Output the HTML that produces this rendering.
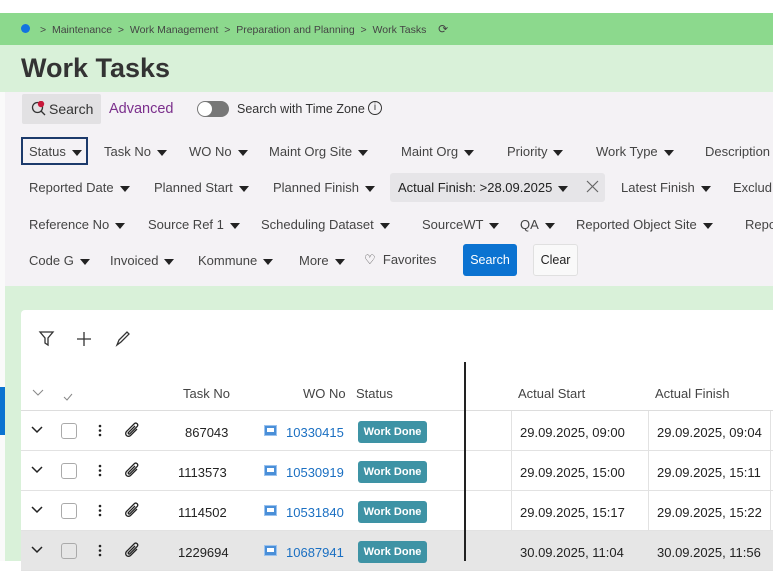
<!DOCTYPE html>
<html><head><meta charset="utf-8"><style>
*{margin:0;padding:0;box-sizing:border-box}
body{width:773px;height:561px;overflow:hidden;background:#fff;font-family:"Liberation Sans",sans-serif;position:relative;color:#333}
.a{position:absolute;white-space:nowrap}
.f{font-size:13px;color:#444}
.f::after{content:"";display:inline-block;margin-left:6px;vertical-align:middle;border-left:5px solid transparent;border-right:5px solid transparent;border-top:6px solid #222}
.row{position:absolute;left:21px;width:752px;height:40px;border-bottom:1px solid #e2e2e2;background:#fff}
.cell{position:absolute;font-size:13px;color:#222}
.badge{position:absolute;left:337px;top:10px;width:69px;height:22px;background:#3e93a5;color:#fff;font-size:11px;font-weight:bold;border-radius:3px;text-align:center;line-height:22px}
.cb{position:absolute;left:40px;top:12px;width:16px;height:16px;border:1px solid #aaa;border-radius:3px;background:#fff}
.wo{position:absolute;left:243px;top:14px;width:13px;height:11px;background:#4a8fd8;border:1px solid #9bc3ef}
.wo::after{content:"";position:absolute;left:2px;right:2px;top:2px;height:4px;background:#fff}
.ic{position:absolute;left:0;top:0}
</style></head><body>
<div class="a" style="left:0;top:13px;width:773px;height:32px;background:#8cd98d"></div>
<div class="a" style="left:0;top:45px;width:773px;height:47px;background:#d9f1d9"></div>
<div class="a" style="left:5px;top:92px;width:768px;height:194px;background:#f4f2f5"></div>
<div class="a" style="left:5px;top:286px;width:768px;height:275px;background:#d9f1d9"></div>
<div class="a" style="left:0;top:92px;width:5px;height:469px;background:#fafafa"></div>
<div class="a" style="left:0;top:387px;width:5px;height:48px;background:#0b73d1"></div>

<div class="a" style="left:21px;top:24px;width:9px;height:9px;border-radius:50%;background:#1274e0"></div>
<div class="a" style="left:40px;top:22px;font-size:10.5px;color:#444">&gt;&nbsp; Maintenance &nbsp;&gt;&nbsp; Work Management &nbsp;&gt;&nbsp; Preparation and Planning &nbsp;&gt;&nbsp; Work Tasks &nbsp;&nbsp; <span style="font-size:12px">⟳</span></div>
<div class="a" style="left:21px;top:53px;font-size:27px;font-weight:bold;color:#333">Work Tasks</div>

<div class="a" style="left:22px;top:94px;width:79px;height:30px;background:#e2e1e3;border-radius:2px"></div>
<svg class="a" style="left:31px;top:101px" width="16" height="16" viewBox="0 0 16 16"><circle cx="6.5" cy="6.5" r="5" fill="none" stroke="#333" stroke-width="1.3"/><path d="M10 10l4 4" stroke="#333" stroke-width="1.3"/><circle cx="10" cy="3" r="3.2" fill="#c8173a"/></svg>
<div class="a" style="left:49px;top:101px;font-size:14px;color:#333">Search</div>
<div class="a" style="left:109px;top:101px;font-size:14.5px;color:#7b2f8c">Advanced</div>
<div class="a" style="left:197px;top:101px;width:32px;height:16px;border-radius:8px;background:#777"></div>
<div class="a" style="left:198px;top:102px;width:14px;height:14px;border-radius:50%;background:#fff"></div>
<div class="a" style="left:237px;top:102px;font-size:12.5px;color:#333">Search with Time Zone</div>
<div class="a" style="left:368px;top:101px;width:14px;height:14px;border:1px solid #333;border-radius:50%;font-size:10px;text-align:center;line-height:12px">i</div>

<div class="a" style="left:21px;top:137px;width:67px;height:28px;border:2px solid #1c3a6b"></div>
<div class="a f" style="left:29px;top:144px">Status</div>
<div class="a f" style="left:104px;top:144px">Task No</div>
<div class="a f" style="left:189px;top:144px">WO No</div>
<div class="a f" style="left:269px;top:144px">Maint Org Site</div>
<div class="a f" style="left:401px;top:144px">Maint Org</div>
<div class="a f" style="left:507px;top:144px">Priority</div>
<div class="a f" style="left:596px;top:144px">Work Type</div>
<div class="a" style="left:705px;top:144px;font-size:13px;color:#444">Description</div>

<div class="a f" style="left:29px;top:180px">Reported Date</div>
<div class="a f" style="left:154px;top:180px">Planned Start</div>
<div class="a f" style="left:273px;top:180px">Planned Finish</div>
<div class="a" style="left:390px;top:173px;width:215px;height:29px;background:#e6e5e8;border-radius:3px"></div>
<div class="a f" style="left:398px;top:180px;color:#222">Actual Finish: &gt;28.09.2025</div>
<svg class="a" style="left:586px;top:180px" width="13" height="13" viewBox="0 0 13 13"><path d="M1 1l11 11M12 1L1 12" stroke="#666" stroke-width="1.2"/></svg>
<div class="a f" style="left:621px;top:180px">Latest Finish</div>
<div class="a" style="left:733px;top:180px;font-size:13px;color:#444">Exclud</div>

<div class="a f" style="left:29px;top:217px">Reference No</div>
<div class="a f" style="left:148px;top:217px">Source Ref 1</div>
<div class="a f" style="left:261px;top:217px">Scheduling Dataset</div>
<div class="a f" style="left:422px;top:217px">SourceWT</div>
<div class="a f" style="left:520px;top:217px">QA</div>
<div class="a f" style="left:576px;top:217px">Reported Object Site</div>
<div class="a" style="left:745px;top:217px;font-size:13px;color:#444">Repo</div>

<div class="a f" style="left:29px;top:253px">Code G</div>
<div class="a f" style="left:110px;top:253px">Invoiced</div>
<div class="a f" style="left:198px;top:253px">Kommune</div>
<div class="a f" style="left:299px;top:253px">More</div>
<div class="a" style="left:364px;top:252px;font-size:13px;color:#444">♡&nbsp; Favorites</div>
<div class="a" style="left:463px;top:244px;width:54px;height:32px;background:#0b73d1;border-radius:3px;color:#fff;font-size:12.5px;text-align:center;line-height:32px">Search</div>
<div class="a" style="left:533px;top:244px;width:45px;height:32px;background:#f9f9f9;border:1px solid #e0e0e0;border-radius:3px;color:#222;font-size:12.5px;text-align:center;line-height:30px">Clear</div>

<div class="a" style="left:21px;top:310px;width:752px;height:251px;background:#fff;border-radius:4px 0 0 0"></div>
<svg class="a" style="left:38px;top:330px" width="100" height="18" viewBox="0 0 100 18"><path d="M2 2h13l-5 6v7l-3-2v-5z" fill="none" stroke="#333" stroke-width="1.3"/><path d="M46 2v14M39 9h14" stroke="#333" stroke-width="1.3"/><path d="M79 15l2-5 8-8 2 2-8 8z" fill="none" stroke="#333" stroke-width="1.3"/></svg>

<div class="row" style="top:362px;height:49px;border-bottom:1px solid #ddd"></div>
<svg class="a" style="left:32px;top:389px" width="12" height="8" viewBox="0 0 12 8"><path d="M1 1l5 5 5-5" fill="none" stroke="#888" stroke-width="1"/></svg>
<svg class="a" style="left:63px;top:393px" width="10" height="8" viewBox="0 0 10 8"><path d="M1 4l3 3 5-6" fill="none" stroke="#888" stroke-width="1"/></svg>
<div class="a" style="left:183px;top:386px;font-size:13px;color:#444">Task No</div>
<div class="a" style="left:303px;top:386px;font-size:13px;color:#444">WO No</div>
<div class="a" style="left:356px;top:386px;font-size:13px;color:#444">Status</div>
<div class="a" style="left:518px;top:386px;font-size:13px;color:#444">Actual Start</div>
<div class="a" style="left:655px;top:386px;font-size:13px;color:#444">Actual Finish</div>

<svg width="0" height="0" style="position:absolute"><defs>
<g id="lead"><path d="M11 16l5 5 5-5" fill="none" stroke="#222" stroke-width="1.5"/><circle cx="79" cy="15" r="1.3" fill="#222"/><circle cx="79" cy="19.5" r="1.3" fill="#222"/><circle cx="79" cy="24" r="1.3" fill="#222"/><path d="M116 18l-6.5 6.5a2.8 2.8 0 0 1-4-4l8-8a2 2 0 0 1 2.8 2.8l-7.5 7.5a.9.9 0 0 1-1.3-1.3l6.5-6.5" fill="none" stroke="#222" stroke-width="1.3"/></g>
</defs></svg>

<div class="row" style="top:411px"><svg class="ic" width="130" height="40"><use href="#lead"/></svg><div class="cb"></div><span class="cell" style="left:164px;top:14px">867043</span><div class="wo"></div><span class="cell" style="left:265px;top:14px;color:#1a6fc2">10330415</span><div class="badge">Work Done</div><span class="cell" style="left:499px;top:14px">29.09.2025, 09:00</span><span class="cell" style="left:636px;top:14px">29.09.2025, 09:04</span></div>
<div class="row" style="top:451px"><svg class="ic" width="130" height="40"><use href="#lead"/></svg><div class="cb"></div><span class="cell" style="left:157px;top:14px">1113573</span><div class="wo"></div><span class="cell" style="left:265px;top:14px;color:#1a6fc2">10530919</span><div class="badge">Work Done</div><span class="cell" style="left:499px;top:14px">29.09.2025, 15:00</span><span class="cell" style="left:636px;top:14px">29.09.2025, 15:11</span></div>
<div class="row" style="top:491px"><svg class="ic" width="130" height="40"><use href="#lead"/></svg><div class="cb"></div><span class="cell" style="left:157px;top:14px">1114502</span><div class="wo"></div><span class="cell" style="left:265px;top:14px;color:#1a6fc2">10531840</span><div class="badge">Work Done</div><span class="cell" style="left:499px;top:14px">29.09.2025, 15:17</span><span class="cell" style="left:636px;top:14px">29.09.2025, 15:22</span></div>
<div class="row" style="top:531px;background:#e6e6e6"><svg class="ic" width="130" height="40"><use href="#lead"/></svg><div class="cb" style="background:#e6e6e6"></div><span class="cell" style="left:157px;top:14px">1229694</span><div class="wo"></div><span class="cell" style="left:265px;top:14px;color:#1a6fc2">10687941</span><div class="badge">Work Done</div><span class="cell" style="left:499px;top:14px">30.09.2025, 11:04</span><span class="cell" style="left:636px;top:14px">30.09.2025, 11:56</span></div>

<div class="a" style="left:464px;top:362px;width:1.5px;height:199px;background:#222"></div>
<div class="a" style="left:511px;top:411px;width:1px;height:120px;background:#e2e2e2"></div>
<div class="a" style="left:648px;top:411px;width:1px;height:120px;background:#e2e2e2"></div>
<div class="a" style="left:770px;top:411px;width:1px;height:120px;background:#e2e2e2"></div>
</body></html>
